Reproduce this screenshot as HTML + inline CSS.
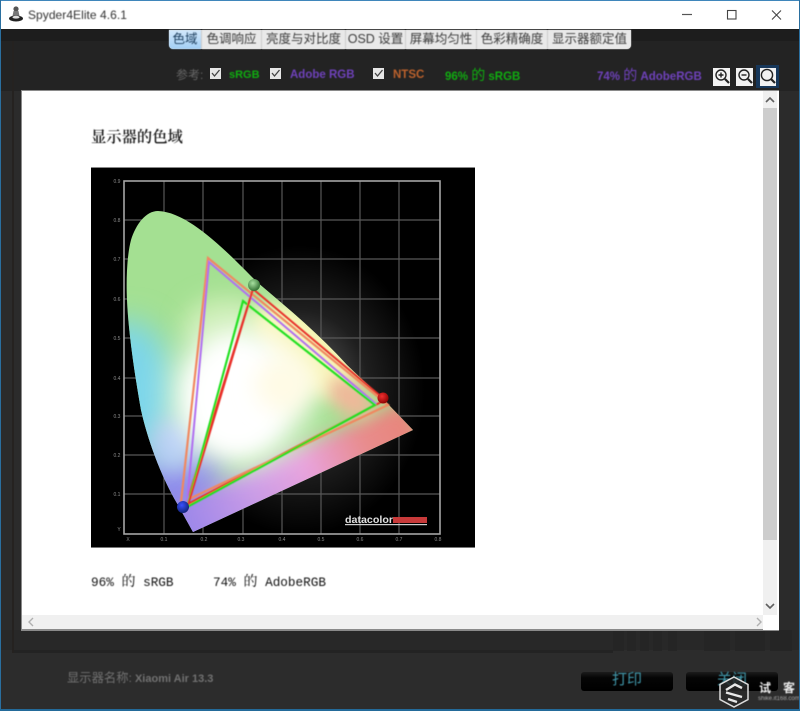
<!DOCTYPE html>
<html lang="zh">
<head>
<meta charset="utf-8">
<title>Spyder4Elite 4.6.1</title>
<style>
html,body{margin:0;padding:0;background:#232323;}
#w{position:relative;width:800px;height:711px;overflow:hidden;background:#2b2b2b;font-family:"Liberation Sans","Noto Sans CJK SC",sans-serif;}
#w div{position:absolute;white-space:nowrap;}
.t{filter:blur(.4px);}
.tab{top:30px;height:19px;line-height:18px;background:#e9e9e9;color:#3c3c3c;font-size:12.5px;text-align:center;}
.lab{top:68px;font-size:11.5px;line-height:14px;font-weight:bold;}
</style>
</head>
<body>
<div id="w">
  <!-- dark header -->
  <div style="left:0;top:29px;width:800px;height:62px;background:#232323;"></div>
  <div style="left:0;top:29px;width:800px;height:12px;background:#1d1d1d;"></div>
  <div style="left:0;top:630px;width:800px;height:81px;background:#2c2c2c;"></div>
  <div style="left:0;top:630px;width:800px;height:20px;background:#282828;"></div>
  <div style="left:13px;top:650px;width:600px;height:3px;background:#232323;"></div>
  <div style="left:12px;top:41px;width:2px;height:612px;background:#252220;"></div>
  <div style="left:613px;top:630px;width:11px;height:21px;background:#252525;"></div>
  <div style="left:627px;top:630px;width:9px;height:21px;background:#252525;"></div>
  <div style="left:640px;top:630px;width:9px;height:21px;background:#252525;"></div>
  <div style="left:653px;top:630px;width:9px;height:21px;background:#252525;"></div>
  <div style="left:668px;top:630px;width:9px;height:21px;background:#252525;"></div>
  <div style="left:704px;top:630px;width:26px;height:21px;background:#252525;"></div>
  <div style="left:735px;top:630px;width:30px;height:21px;background:#252525;"></div>
  <div style="left:770px;top:630px;width:22px;height:21px;background:#252525;"></div>

  <!-- title bar -->
  <div style="left:0;top:0;width:800px;height:29px;background:#fff;"></div>
  <svg style="position:absolute;left:8px;top:5px" width="18" height="18" viewBox="0 0 18 18">
    <circle cx="8" cy="4" r="2.6" fill="#555"/>
    <path d="M5.5 6 L10.5 6 L11.5 11 L4.5 11Z" fill="#777"/>
    <ellipse cx="8" cy="13.5" rx="7" ry="3" fill="#222"/>
    <ellipse cx="8" cy="12.2" rx="3.6" ry="1.4" fill="#ddd"/>
  </svg>
  <div class="t" style="left:28px;top:7px;font-size:12px;line-height:16px;color:#333;letter-spacing:.05px;">Spyder4Elite 4.6.1</div>
  <svg style="position:absolute;left:670px;top:0" width="130" height="29" viewBox="0 0 130 29">
    <path d="M12 14.5H22" stroke="#555" stroke-width="1.2"/>
    <rect x="57.5" y="10.5" width="8.5" height="8.5" fill="none" stroke="#444" stroke-width="1.1"/>
    <path d="M102 10.5L111 19.5M111 10.5L102 19.5" stroke="#444" stroke-width="1.1"/>
  </svg>

  <!-- tabs -->
  <div style="left:169px;top:30px;width:462px;height:19px;background:#cdcdcd;border-radius:0 0 4px 4px;"></div>
  <div class="tab t" style="left:169px;width:32px;background:linear-gradient(#d3e8fb,#a3cff5);border-radius:0 0 0 4px;color:#1c3d5c;">色域</div>
  <div class="tab t" style="left:202px;width:59px;">色调响应</div>
  <div class="tab t" style="left:262px;width:83px;">亮度与对比度</div>
  <div class="tab t" style="left:346px;width:59px;">OSD 设置</div>
  <div class="tab t" style="left:406px;width:70px;">屏幕均匀性</div>
  <div class="tab t" style="left:477px;width:70px;">色彩精确度</div>
  <div class="tab t" style="left:548px;width:83px;border-radius:0 0 4px 0;">显示器额定值</div>

  <!-- legend -->
  <div class="t lab" style="left:176px;color:#666;font-weight:normal;font-size:12px;">参考:</div>
  <svg style="position:absolute;left:0;top:0" width="800" height="91" viewBox="0 0 800 91">
    <g fill="#e6e6e6"><rect x="210" y="68" width="11" height="11"/><rect x="270" y="68" width="11" height="11"/><rect x="373" y="68" width="11" height="11"/></g>
    <g fill="none" stroke="#444" stroke-width="1.3"><path d="M212 73l2.5 3 5-6"/><path d="M272 73l2.5 3 5-6"/><path d="M375 73l2.5 3 5-6"/></g>
  </svg>
  <div class="t lab" style="left:229px;color:#10ad10;font-size:11px;">sRGB</div>
  <div class="t lab" style="left:290px;color:#6f42bb;">Adobe RGB</div>
  <div class="t lab" style="left:393px;color:#bd622c;">NTSC</div>
  <div class="t lab" style="left:445px;color:#10ad10;">96% <span style="font-size:14px;font-weight:normal">的</span> sRGB</div>
  <div class="t lab" style="left:597px;color:#6f42bb;">74% <span style="font-size:14px;font-weight:normal">的</span> AdobeRGB</div>

  <!-- zoom icons -->
  <div style="left:756px;top:65px;width:23px;height:23px;background:#17375a;"></div>
  <svg style="position:absolute;left:700px;top:60px" width="100" height="40" viewBox="0 0 100 40">
    <rect x="13" y="8" width="17" height="18" fill="#f2f2f2"/>
    <rect x="36" y="8" width="17" height="18" fill="#f2f2f2"/>
    <rect x="60" y="8" width="16" height="18" fill="#f2f2f2"/>
    <g fill="none" stroke="#222" stroke-width="1.4">
      <circle cx="21" cy="15" r="5"/><path d="M25 19l4 4" stroke-width="2.2"/><path d="M18.5 15h5M21 12.5v5"/>
      <circle cx="44" cy="15" r="5"/><path d="M48 19l4 4" stroke-width="2.2"/><path d="M41.5 15h5"/>
      <circle cx="67" cy="15" r="5.6"/><path d="M71 19l4 4" stroke-width="2.2"/>
    </g>
  </svg>

  <!-- white panel -->
  <div style="left:21px;top:90px;width:758px;height:541px;background:#8a8a8a;"></div>
  <div style="left:22px;top:91px;width:757px;height:538px;background:#fff;"></div>
  <div style="left:763px;top:91px;width:14px;height:524px;background:#f0f0f0;"></div>
  <div style="left:763px;top:108px;width:14px;height:432px;background:#cdcdcd;"></div>
  <div style="left:22px;top:615px;width:741px;height:14px;background:#f0f0f0;"></div>
  <div style="left:763px;top:615px;width:16px;height:15px;background:#fff;"></div>
  <svg style="position:absolute;left:0;top:0" width="800" height="640" viewBox="0 0 800 640">
    <g fill="none" stroke="#606060" stroke-width="1.6">
      <path d="M766 102l4-4 4 4"/><path d="M766 604l4 4 4-4"/>
    </g>
    <g fill="none" stroke="#b0b0b0" stroke-width="1.4">
      <path d="M33 618l-4 4 4 4"/><path d="M757 618l4 4-4 4"/>
    </g>
  </svg>

  <div class="t" style="left:91px;top:126px;font-size:15.3px;line-height:20px;color:#111;font-weight:600;font-family:'Noto Serif CJK SC','Liberation Serif',serif;">显示器的色域</div>

  <!-- chart -->
  <svg style="position:absolute;left:91px;top:167px" width="384" height="381" viewBox="91 167 384 381">
    <defs>
      <clipPath id="sh"><path d="M158 211C146 211 136 224 131 240C127 255 126 280 127 300C128 325 133 365 141 410C147 437 160 475 178 505L193 532L413 430L387 403L347 365C320 335 290 310 257 282C230 255 190 212 158 211Z"/></clipPath>
      <linearGradient id="edge" gradientUnits="userSpaceOnUse" x1="185" y1="532" x2="413" y2="430">
        <stop offset="0" stop-color="#9a86ea"/><stop offset=".3" stop-color="#c79ae6"/><stop offset=".55" stop-color="#e8a2dc"/><stop offset=".8" stop-color="#e88c8c"/><stop offset="1" stop-color="#e8857a"/>
      </linearGradient>
      <filter id="b1" x="-60%" y="-60%" width="220%" height="220%"><feGaussianBlur stdDeviation="18"/></filter>
      <filter id="b2" x="-60%" y="-60%" width="220%" height="220%"><feGaussianBlur stdDeviation="11"/></filter>
      <filter id="b3" x="-60%" y="-60%" width="220%" height="220%"><feGaussianBlur stdDeviation="8"/></filter>
      <filter id="b4" x="-60%" y="-60%" width="220%" height="220%"><feGaussianBlur stdDeviation="15"/></filter>
      <filter id="s"><feGaussianBlur stdDeviation=".45"/></filter>
      <radialGradient id="halo"><stop offset="0" stop-color="#fff" stop-opacity=".42"/><stop offset=".55" stop-color="#fff" stop-opacity=".12"/><stop offset="1" stop-color="#fff" stop-opacity="0"/></radialGradient>
      <radialGradient id="ball1" cx=".4" cy=".35" r=".7"><stop offset="0" stop-color="#a8e0a0"/><stop offset="1" stop-color="#2c6a2c"/></radialGradient>
      <radialGradient id="ball2" cx=".4" cy=".35" r=".7"><stop offset="0" stop-color="#f03030"/><stop offset="1" stop-color="#800"/></radialGradient>
      <radialGradient id="ball3" cx=".4" cy=".35" r=".7"><stop offset="0" stop-color="#3a50ff"/><stop offset="1" stop-color="#102070"/></radialGradient>
    </defs>
    <rect x="91" y="167" width="384" height="381" fill="#000"/>
    <rect x="91" y="167" width="384" height="1" fill="#888"/>
    <rect x="91" y="547" width="384" height="1" fill="#777"/>
    <ellipse cx="300" cy="390" rx="125" ry="145" fill="url(#halo)"/>
    <!-- grid -->
    <g stroke="#585858" stroke-width="1.2" fill="none">
      <path d="M164 181V534M203 181V534M243 181V534M282 181V534M321 181V534M360 181V534M399 181V534"/>
      <path d="M124 220H440M124 259H440M124 299H440M124 338H440M124 378H440M124 416H440M124 455H440M124 494H440"/>
    </g>
    <rect x="124" y="181" width="316" height="353" fill="none" stroke="#a6a6a6" stroke-width="1.6"/>
    <g font-family="Liberation Sans,sans-serif" font-size="5" fill="#8a8a8a" text-anchor="middle">
      <text x="117" y="183">0.9</text><text x="117" y="222">0.8</text><text x="117" y="261">0.7</text><text x="117" y="301">0.6</text><text x="117" y="340">0.5</text><text x="117" y="380">0.4</text><text x="117" y="418">0.3</text><text x="117" y="457">0.2</text><text x="117" y="496">0.1</text><text x="119" y="531">Y</text>
      <text x="128" y="541">X</text><text x="164" y="541">0.1</text><text x="204" y="541">0.2</text><text x="241" y="541">0.3</text><text x="282" y="541">0.4</text><text x="321" y="541">0.5</text><text x="360" y="541">0.6</text><text x="399" y="541">0.7</text><text x="438" y="541">0.8</text>
    </g>
    <!-- horseshoe -->
    <g clip-path="url(#sh)">
      <rect x="100" y="190" width="340" height="360" fill="#a4e092"/>
      <ellipse cx="225" cy="325" rx="42" ry="30" fill="#c6ecae" filter="url(#b2)"/>
      <path d="M105 450H225L215 570H105Z" fill="#8f8cea" filter="url(#b4)"/>
      <ellipse cx="128" cy="395" rx="46" ry="75" fill="#7cd6ea" filter="url(#b4)"/>
      <ellipse cx="172" cy="445" rx="24" ry="28" fill="#b4cdf4" filter="url(#b2)"/>
      <path d="M185 545L423 437" stroke="url(#edge)" stroke-width="82" fill="none" filter="url(#b3)"/>
      <ellipse cx="305" cy="350" rx="62" ry="34" fill="#f6f4b4" filter="url(#b3)" transform="rotate(40 305 350)"/>
      <ellipse cx="350" cy="398" rx="26" ry="16" fill="#efb89a" filter="url(#b3)" transform="rotate(38 350 398)"/>
      <ellipse cx="240" cy="395" rx="66" ry="68" fill="#fff" filter="url(#b1)"/>
      <ellipse cx="235" cy="398" rx="46" ry="54" fill="#fff" filter="url(#b2)"/>
      <ellipse cx="285" cy="385" rx="30" ry="28" fill="#fffbe6" filter="url(#b2)"/>
    </g>
    <!-- triangles -->
    <g fill="none" stroke-width="2" filter="url(#s)" stroke-linejoin="miter">
      <path d="M253 289L385 400L186 505Z" stroke="#e8302a"/>
      <path d="M181 502L208 258L388 405L187 500" stroke="#f08860" stroke-width="2.2"/>
      <path d="M187 503L209 262L376 404" stroke="#b070f0"/>
      <path d="M243 301L375 405L187 507Z" stroke="#22e022" stroke-width="2.2"/>
      <path d="M253 289L188 505" stroke="#e8302a"/>
    </g>
    <circle cx="254" cy="285" r="6" fill="url(#ball1)"/>
    <circle cx="383" cy="398" r="5.5" fill="url(#ball2)"/>
    <circle cx="183" cy="507" r="6" fill="url(#ball3)"/>
    <!-- logo -->
    <text x="345" y="523" font-family="Liberation Sans,sans-serif" font-size="10.5" font-weight="bold" fill="#e0e0e0" textLength="48" lengthAdjust="spacingAndGlyphs">datacolor</text>
    <rect x="393" y="517" width="34" height="6" fill="#c83a3a"/>
    <rect x="345" y="524" width="82" height="1.2" fill="#cfcfcf"/>
  </svg>

  <!-- caption -->
  <div class="t" style="left:91px;top:572px;font-size:12.7px;line-height:18px;color:#111;font-family:'Liberation Mono','Noto Serif CJK SC',monospace;">96% <span style="font-size:14px;font-family:'Noto Serif CJK SC',serif">的</span> sRGB</div>
  <div class="t" style="left:213px;top:572px;font-size:12.7px;line-height:18px;color:#111;font-family:'Liberation Mono','Noto Serif CJK SC',monospace;">74% <span style="font-size:14px;font-family:'Noto Serif CJK SC',serif">的</span> AdobeRGB</div>

  <!-- footer -->
  <div class="t" style="left:67px;top:670px;font-size:11px;line-height:16px;color:#727272;font-weight:bold;"><span style="font-weight:normal;font-size:12.3px;">显示器名称:</span> Xiaomi Air 13.3</div>
  <div style="left:581px;top:672px;width:92px;height:19px;background:linear-gradient(#1c1c1c 0,#050505 30%,#000 100%);border-radius:3px;"></div>
  <div style="left:686px;top:672px;width:92px;height:19px;background:linear-gradient(#1c1c1c 0,#050505 30%,#000 100%);border-radius:3px;"></div>
  <div class="t" style="left:581px;top:671px;width:92px;text-align:center;font-size:15px;line-height:18px;color:#3f95a8;">打印</div>
  <div class="t" style="left:686px;top:671px;width:92px;text-align:center;font-size:15px;line-height:18px;color:#3f95a8;">关闭</div>

  <!-- watermark -->
  <svg style="position:absolute;left:717px;top:675px" width="34" height="34" viewBox="0 0 34 34">
    <path d="M17 2L31 9.5V24.5L17 32L3 24.5V9.5Z" fill="#2a2a2a" fill-opacity=".8" stroke="#dcdcdc" stroke-width="1.5"/>
    <path d="M9 15L18 9.5L25 13" fill="none" stroke="#e8e8e8" stroke-width="2.4"/>
    <path d="M9 17.5L25 22M11 24L20 27" fill="none" stroke="#e8e8e8" stroke-width="2.4"/>
  </svg>
  <div class="t" style="left:759px;top:680px;font-size:12px;line-height:16px;color:#eee;font-weight:bold;letter-spacing:12px;">试客</div>
  <div class="t" style="left:758px;top:695px;font-size:6px;line-height:8px;color:#aaa;">shike.it168.com</div>

  <!-- window border -->
  <div style="left:0;top:0;width:800px;height:1px;background:#3f86bb;"></div>
  <div style="left:0;top:0;width:1px;height:711px;background:#2a6f9f;"></div>
  <div style="left:799px;top:0;width:1px;height:711px;background:#2a6f9f;"></div>
  <div style="left:0;top:709px;width:800px;height:2px;background:#236a99;"></div>
</div>
</body>
</html>
